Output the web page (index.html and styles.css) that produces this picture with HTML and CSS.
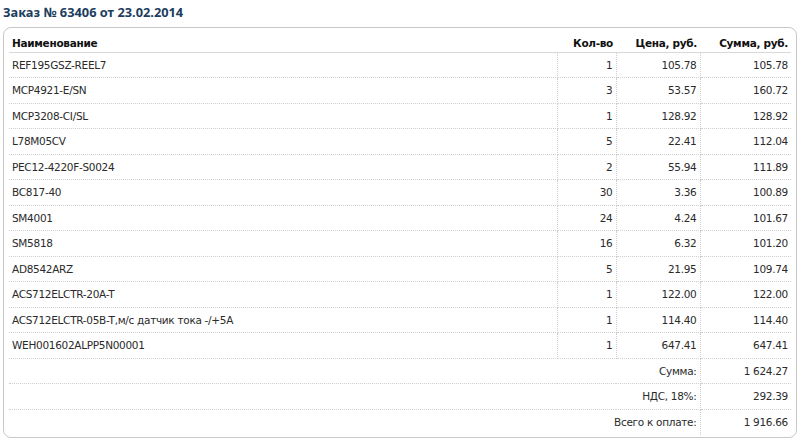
FILE: index.html
```html
<!DOCTYPE html>
<html lang="ru">
<head>
<meta charset="utf-8">
<link rel="stylesheet" href="styles.css">
</head>
<body>
<h1 class="title">Заказ № 63406 от 23.02.2014</h1>
<div class="box">
<table class="order">
<thead>
<tr><th class="name">Наименование</th><th class="qty">Кол-во</th><th class="price">Цена, руб.</th><th class="sum">Сумма, руб.</th></tr>
</thead>
<tbody>
<tr><td class="name">REF195GSZ-REEL7</td><td class="qty">1</td><td class="price">105.78</td><td class="sum">105.78</td></tr>
<tr><td class="name">MCP4921-E/SN</td><td class="qty">3</td><td class="price">53.57</td><td class="sum">160.72</td></tr>
<tr><td class="name">MCP3208-CI/SL</td><td class="qty">1</td><td class="price">128.92</td><td class="sum">128.92</td></tr>
<tr><td class="name">L78M05CV</td><td class="qty">5</td><td class="price">22.41</td><td class="sum">112.04</td></tr>
<tr><td class="name">PEC12-4220F-S0024</td><td class="qty">2</td><td class="price">55.94</td><td class="sum">111.89</td></tr>
<tr><td class="name">BC817-40</td><td class="qty">30</td><td class="price">3.36</td><td class="sum">100.89</td></tr>
<tr><td class="name">SM4001</td><td class="qty">24</td><td class="price">4.24</td><td class="sum">101.67</td></tr>
<tr><td class="name">SM5818</td><td class="qty">16</td><td class="price">6.32</td><td class="sum">101.20</td></tr>
<tr><td class="name">AD8542ARZ</td><td class="qty">5</td><td class="price">21.95</td><td class="sum">109.74</td></tr>
<tr><td class="name">ACS712ELCTR-20A-T</td><td class="qty">1</td><td class="price">122.00</td><td class="sum">122.00</td></tr>
<tr><td class="name">ACS712ELCTR-05B-T,м/с датчик тока -/+5A</td><td class="qty">1</td><td class="price">114.40</td><td class="sum">114.40</td></tr>
<tr><td class="name">WEH001602ALPP5N00001</td><td class="qty">1</td><td class="price">647.41</td><td class="sum">647.41</td></tr>
</tbody>
<tfoot>
<tr><td class="label" colspan="3">Сумма:</td><td class="sum">1 624.27</td></tr>
<tr><td class="label" colspan="3">НДС, 18%:</td><td class="sum">292.39</td></tr>
<tr><td class="label" colspan="3">Всего к оплате:</td><td class="sum">1 916.66</td></tr>
</tfoot>
</table>
</div>
</body>
</html>
```
FILE: styles.css
```css
html, body {
  margin: 0;
  padding: 0;
  background: #fff;
}
body {
  font-family: "DejaVu Sans", Verdana, sans-serif;
  color: #2a2a2a;
  padding: 0 3px;
}
.title {
  margin: 0;
  padding: 5px 0 0 0;
  height: 27px;
  box-sizing: border-box;
  font-family: "Noto Sans", "DejaVu Sans", sans-serif;
  font-size: 12.8px;
  font-weight: bold;
  color: #1c3d5e;
  line-height: 14px;
}
.box {
  border: 1px solid #c9c9c9;
  border-radius: 8px;
  padding: 5px 5px 0 5px;
  height: 411px;
  box-sizing: border-box;
}
.order {
  width: 100%;
  border-collapse: collapse;
  font-size: 10.5px;
  letter-spacing: -0.3px;
  table-layout: fixed;
}
.order th, .order td {
  padding: 0 3px;
  height: 25.5px;
  box-sizing: border-box;
  white-space: nowrap;
  border-bottom: 1px dotted #cfcfcf;
}
.order th {
  font-weight: bold;
  height: 19px;
  padding-top: 2px;
  border-bottom: 1px solid #d8d8d8;
  color: #111;
}
.order th.name { text-align: left; }
.order .qty, .order .price, .order .sum, .order .label { text-align: right; }
.order th.qty { width: 59px; }
.order th.price { width: 84px; }
.order th.sum { width: 91px; }
.order td.name, .order td.qty, .order td.price, .order td.label {
  border-right: 1px dotted #cfcfcf;
}
.order tfoot tr:last-child td { border-bottom: none; }
```
